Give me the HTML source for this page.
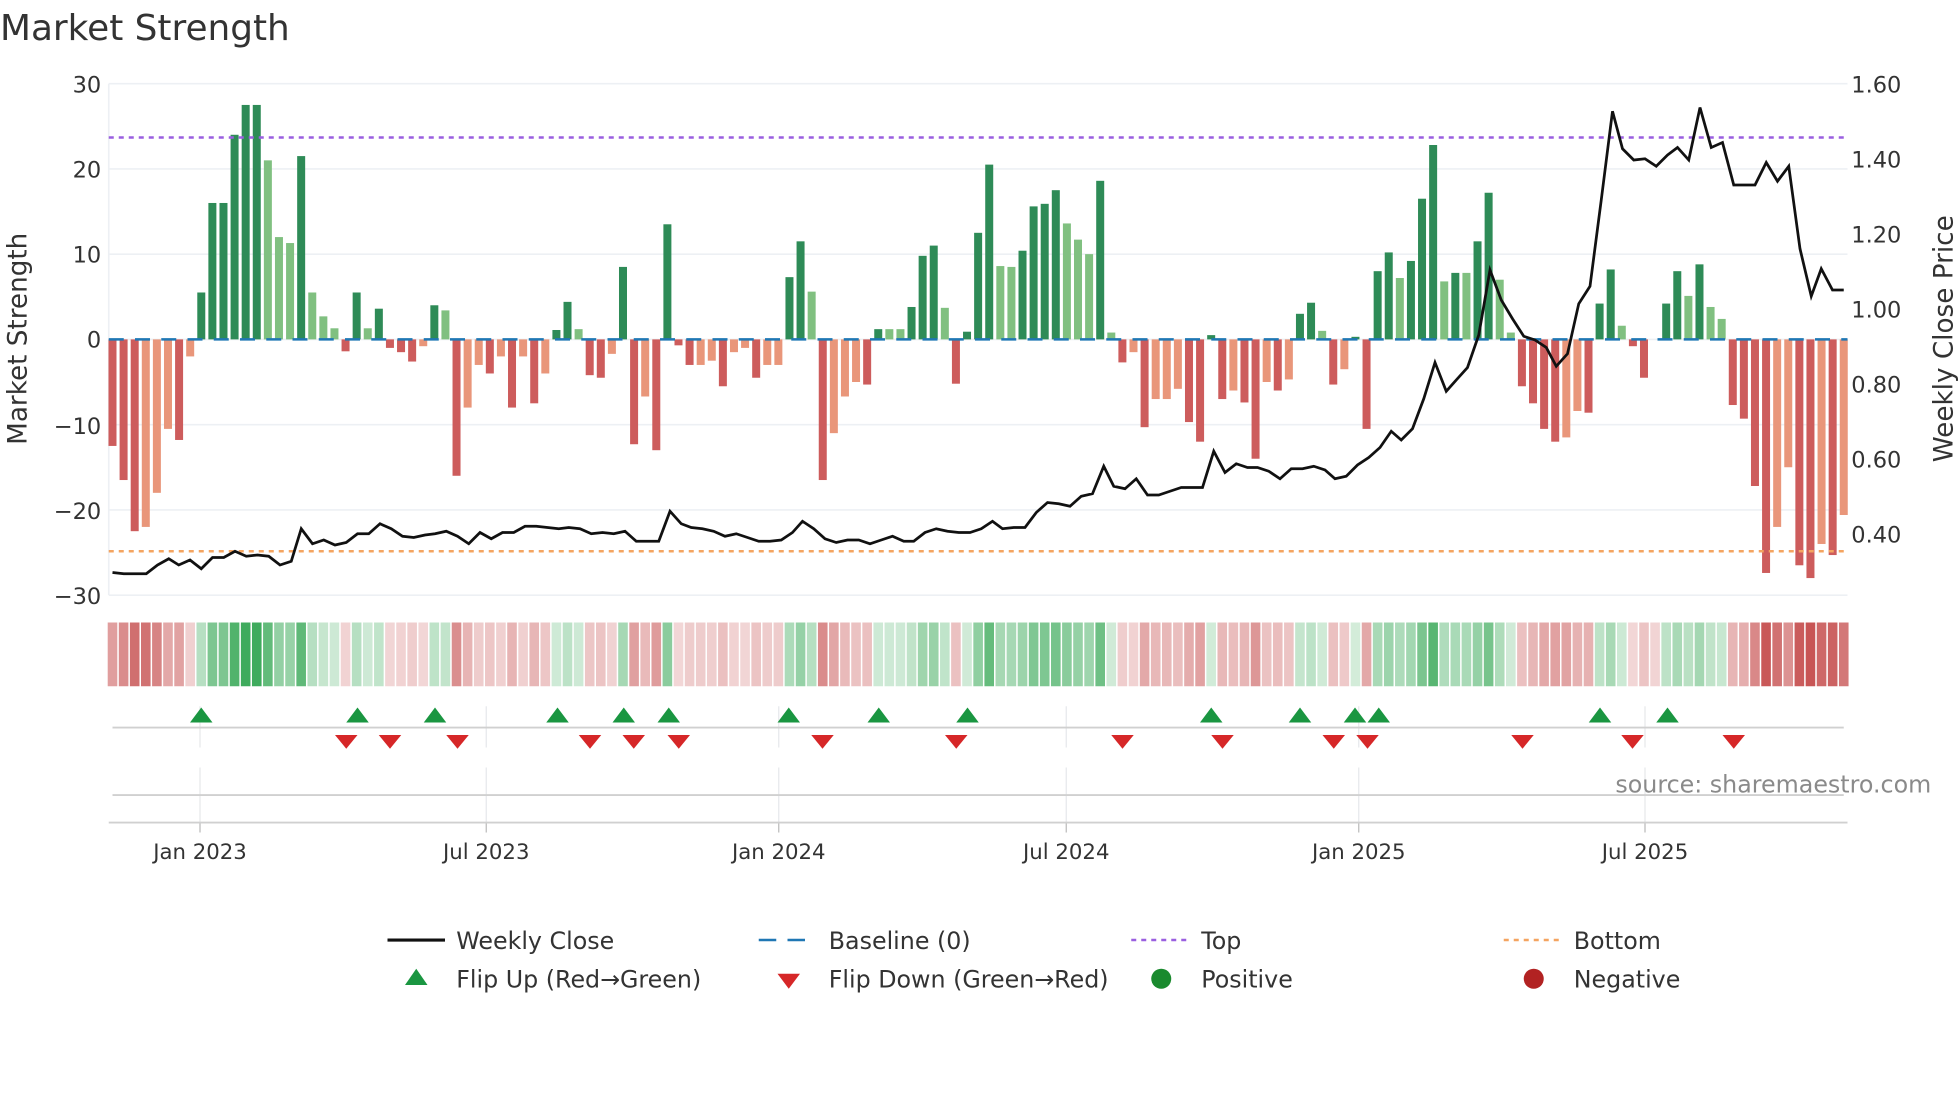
<!DOCTYPE html>
<html><head><meta charset="utf-8"><style>
html,body{margin:0;padding:0;background:#fff;width:1960px;height:1102px;overflow:hidden}
svg{display:block}
text{font-family:"DejaVu Sans","Liberation Sans",sans-serif;fill:#333}
</style></head><body>
<svg id="s" width="1960" height="1102" viewBox="0 0 1568 881.6" xmlns="http://www.w3.org/2000/svg">
<text x="0" y="32" font-size="28.7">Market Strength</text>
<g id="grid"></g>
<g id="heat"></g>
<g id="bars"></g>
<line x1="87" x2="1478" y1="271.5" y2="271.5" stroke="#1f77b4" stroke-width="2" stroke-dasharray="12 9"/>
<line x1="87" x2="1478" y1="110" y2="110" stroke="#9a5fe0" stroke-width="2" stroke-dasharray="4 4"/>
<line x1="87" x2="1478" y1="441" y2="441" stroke="#f4a460" stroke-width="2" stroke-dasharray="4 4"/>
<polyline id="price" fill="none" stroke="#111" stroke-width="2.2"/>
<g id="marks"></g>
<g font-size="18">
<text x="81" y="74" text-anchor="end">30</text>
<text x="81" y="142" text-anchor="end">20</text>
<text x="81" y="210" text-anchor="end">10</text>
<text x="81" y="278" text-anchor="end">0</text>
<text x="81" y="347" text-anchor="end">−10</text>
<text x="81" y="415" text-anchor="end">−20</text>
<text x="81" y="483" text-anchor="end">−30</text>
<text x="1481" y="74">1.60</text>
<text x="1481" y="134">1.40</text>
<text x="1481" y="194">1.20</text>
<text x="1481" y="254">1.00</text>
<text x="1481" y="314">0.80</text>
<text x="1481" y="374">0.60</text>
<text x="1481" y="434">0.40</text>
<text x="160" y="687" text-anchor="middle" font-size="17">Jan 2023</text>
<text x="389" y="687" text-anchor="middle" font-size="17">Jul 2023</text>
<text x="623" y="687" text-anchor="middle" font-size="17">Jan 2024</text>
<text x="853" y="687" text-anchor="middle" font-size="17">Jul 2024</text>
<text x="1087" y="687" text-anchor="middle" font-size="17">Jan 2025</text>
<text x="1316" y="687" text-anchor="middle" font-size="17">Jul 2025</text>
</g>
<text transform="translate(21,271) rotate(-90)" text-anchor="middle" font-size="21">Market Strength</text>
<text transform="translate(1562,271) rotate(-90)" text-anchor="middle" font-size="21">Weekly Close Price</text>
<text x="1545" y="634" text-anchor="end" font-size="19" style="fill:#8a8a8a">source: sharemaestro.com</text>
<g font-size="19">
<line x1="310" x2="356" y1="752" y2="752" stroke="#111" stroke-width="2.5"/><text x="365" y="759">Weekly Close</text>
<line x1="607" x2="652" y1="752" y2="752" stroke="#1f77b4" stroke-width="2" stroke-dasharray="14 9"/><text x="663" y="759">Baseline (0)</text>
<line x1="905" x2="950" y1="752" y2="752" stroke="#9a5fe0" stroke-width="2" stroke-dasharray="4 4"/><text x="961" y="759">Top</text>
<line x1="1203" x2="1248" y1="752" y2="752" stroke="#f4a460" stroke-width="2" stroke-dasharray="4 4"/><text x="1259" y="759">Bottom</text>
<polygon points="324,788 342,788 333,775" fill="#1a9641"/><text x="365" y="790">Flip Up (Red→Green)</text>
<polygon points="622,779 640,779 631,791" fill="#d62728"/><text x="663" y="790">Flip Down (Green→Red)</text>
<circle cx="929" cy="783" r="8" fill="#1a8a2e"/><text x="961" y="790">Positive</text>
<circle cx="1227" cy="783" r="8" fill="#b22222"/><text x="1259" y="790">Negative</text>
</g>
</svg>
<script>
var NS="http://www.w3.org/2000/svg";
function el(p,t,a){var e=document.createElementNS(NS,t);for(var k in a)e.setAttribute(k,a[k]);document.getElementById(p).appendChild(e);return e;}
[30,20,10,0,-10,-20,-30].forEach(function(v){var y=271.5-v*6.82;el("grid","line",{x1:87,x2:1478,y1:y,y2:y,stroke:"#edf0f4","stroke-width":1.3});});
el("grid","line",{x1:87,x2:87,y1:67,y2:476,stroke:"#edf0f4","stroke-width":1.3});
[160,389,623,853,1087,1316].forEach(function(x){el("grid","line",{x1:x,x2:x,y1:565,y2:598,stroke:"#e6e8eb"});el("grid","line",{x1:x,x2:x,y1:614,y2:658,stroke:"#e6e8eb"});el("grid","line",{x1:x,x2:x,y1:658,y2:666,stroke:"#bbb"});});
el("grid","line",{x1:90,x2:1475,y1:582,y2:582,stroke:"#d0d0d0","stroke-width":1.5});
el("grid","line",{x1:90,x2:1475,y1:636,y2:636,stroke:"#d0d0d0","stroke-width":1.5});
el("grid","line",{x1:87,x2:1478,y1:658,y2:658,stroke:"#d0d0d0","stroke-width":1.5});
var B="-12.5d -16.5d -22.5d -22s -18s -10.5s -11.8d -2s 5.5g 16g 16g 24g 27.5g 27.5g 21l 12l 11.3l 21.5g 5.5l 2.7l 1.3l -1.4d 5.5g 1.3l 3.6g -1d -1.5d -2.6d -0.8s 4g 3.4l -16d -8s -3s -4d -2s -8d -2s -7.5d -4s 1.1g 4.4g 1.2l -4.2d -4.5d -1.7s 8.5g -12.3d -6.7s -13d 13.5g -0.7d -3d -3s -2.5s -5.5d -1.5s -1s -4.5d -3s -3s 7.3g 11.5g 5.6l -16.5d -11s -6.7s -5s -5.3d 1.2g 1.2l 1.2l 3.8g 9.8g 11g 3.7l -5.2d 0.9g 12.5g 20.5g 8.6l 8.5l 10.4g 15.6g 15.9g 17.5g 13.6l 11.7l 10l 18.6g 0.8l -2.7d -1.5s -10.3d -7s -7s -5.8s -9.7d -12d 0.5g -7d -6s -7.4d -14d -5s -6d -4.7s 3g 4.3g 1l -5.3d -3.5s 0.3g -10.5d 8g 10.2g 7.2l 9.2g 16.5g 22.8g 6.8l 7.8g 7.8l 11.5g 17.2g 7l 0.8l -5.5d -7.5d -10.5d -12d -11.5s -8.4s -8.6d 4.2g 8.2g 1.6l -0.8d -4.5d 0g 4.2g 8g 5.1l 8.8g 3.8l 2.4l -7.7d -9.3d -17.2d -27.4d -22s -15s -26.5d -28d -24s -25.3d -20.6s".split(" ");
var col={d:"#cd5c5c",s:"#e9967a",g:"#2e8b57",l:"#80c080"};
var n=B.length,step=(1475-90)/(n-1);
B.forEach(function(t,i){var v=parseFloat(t),c=t.slice(-1),x=90+i*step;
 var h=Math.abs(v)*6.82,y=v>=0?271.5-h:271.5;
 if(h>0)el("bars","rect",{x:x-3.2,y:y,width:6.4,height:h,fill:col[c]});
 var a=Math.min(1,0.22+Math.abs(v)/28*0.78);
 var f=v>0?"rgba(60,170,90,"+a+")":(v<0?"rgba(200,85,85,"+a+")":"rgba(200,85,85,0.25)");
 el("heat","rect",{x:x-step/2+0.6,y:498,width:step-1.2,height:51,fill:f});
});
var P=[[90,458],[99,459],[117,459],[126,452],[135,447],[143,452],[152,448],[161,455],[170,446],[179,446],[188,441],[197,445],[206,444],[215,445],[224,452],[233,449],[241,423],[250,435],[259,432],[268,436],[277,434],[286,427],[295,427],[304,419],[313,423],[322,429],[331,430],[340,428],[348,427],[357,425],[366,429],[375,435],[384,426],[393,431],[402,426],[411,426],[420,421],[429,421],[438,422],[447,423],[455,422],[464,423],[473,427],[482,426],[491,427],[500,425],[509,433],[518,433],[527,433],[536,409],[545,419],[553,422],[562,423],[571,425],[580,429],[589,427],[598,430],[607,433],[616,433],[625,432],[634,426],[642,417],[651,423],[660,431],[669,434],[678,432],[687,432],[696,435],[705,432],[714,429],[723,433],[731,433],[740,426],[749,423],[758,425],[767,426],[776,426],[785,423],[794,417],[802,423],[811,422],[820,422],[829,410],[838,402],[847,403],[856,405],[865,397],[874,395],[883,373],[891,389],[900,391],[909,383],[918,396],[927,396],[936,393],[945,390],[953,390],[962,390],[971,361],[980,378],[989,371],[998,374],[1006,374],[1015,377],[1024,383],[1033,375],[1042,375],[1051,373],[1060,376],[1068,383],[1077,381],[1086,372],[1095,366],[1104,358],[1113,345],[1121,352],[1130,343],[1139,319],[1148,290],[1157,313],[1165,304],[1174,294],[1183,268],[1192,216],[1201,240],[1210,255],[1219,269],[1228,272],[1237,278],[1245,293],[1254,283],[1263,243],[1272,229],[1281,160],[1290,89],[1298,119],[1307,128],[1316,127],[1325,133],[1334,124],[1342,118],[1351,128],[1360,86],[1369,118],[1378,114],[1387,148],[1395,148],[1404,148],[1413,130],[1422,145],[1431,133],[1440,199],[1449,237],[1457,215],[1466,232],[1475,232]];
document.getElementById("price").setAttribute("points",P.map(function(p){return p.join(",")}).join(" "));
[161,286,348,446,499,535,631,703,774,969,1040,1084,1103,1280,1334].forEach(function(x){el("marks","polygon",{points:(x-9)+",578 "+(x+9)+",578 "+x+",566",fill:"#1a9641"});});
[277,312,366,472,507,543,658,765,898,978,1067,1094,1218,1306,1387].forEach(function(x){el("marks","polygon",{points:(x-9)+",588 "+(x+9)+",588 "+x+",599",fill:"#d62728"});});
</script>
</body></html>
